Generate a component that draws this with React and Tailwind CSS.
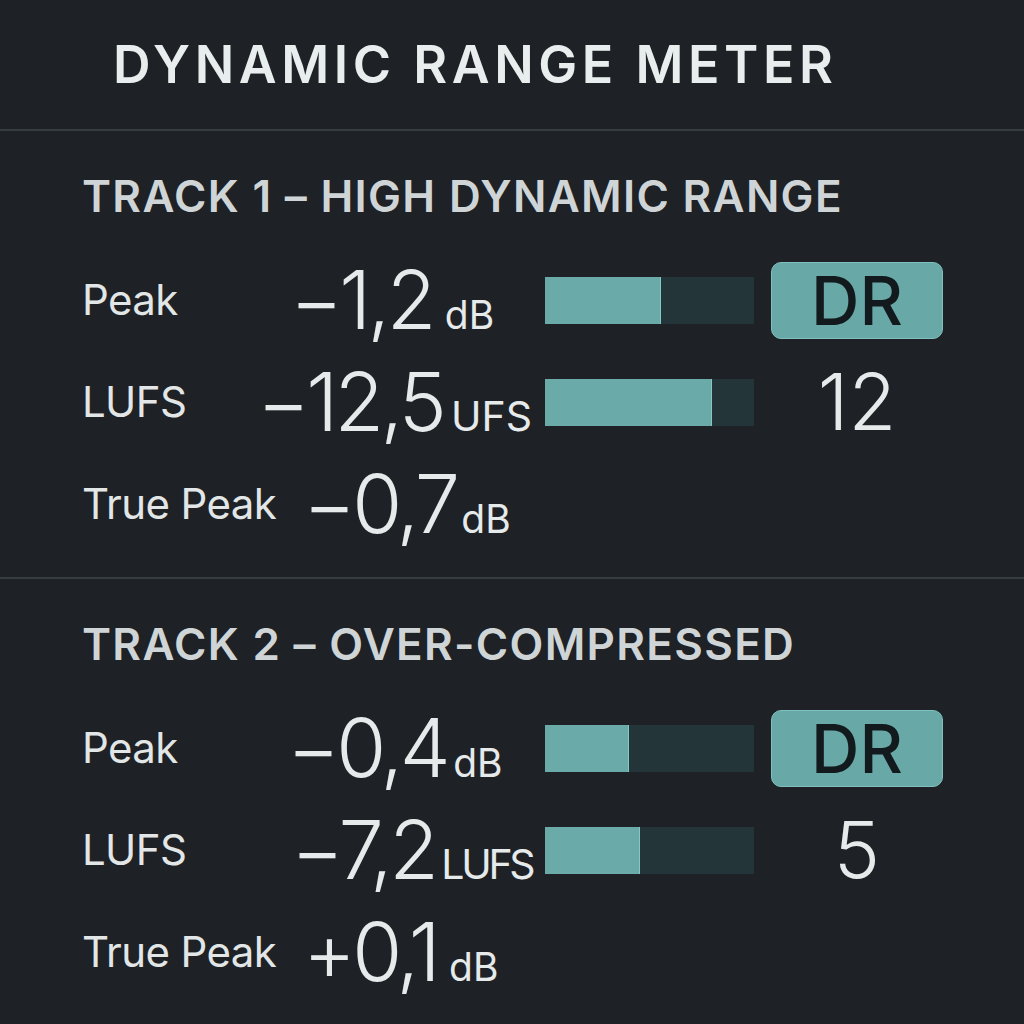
import React from "react";

const tracks = [
  {
    title: "TRACK 1 – HIGH DYNAMIC RANGE",
    dr: "12",
    rows: [
      { label: "Peak", value: "−1,2", unit: "dB", unitCls: "text-[39px] ml-[12px]", shift: "ml-[30px]", bar: 55.5 },
      { label: "LUFS", value: "−12,5", unit: "UFS", unitCls: "text-[41px] ml-[8px]", shift: "ml-[-3px]", bar: 80 },
      { label: "True Peak", value: "−0,7", unit: "dB", unitCls: "text-[39px] ml-[5px]", shift: "ml-[43px]", bar: null },
    ],
  },
  {
    title: "TRACK 2 – OVER-COMPRESSED",
    dr: "5",
    rows: [
      { label: "Peak", value: "−0,4", unit: "dB", unitCls: "text-[39px] ml-[6px]", shift: "ml-[27px]", bar: 40 },
      { label: "LUFS", value: "−7,2", unit: "LUFS", unitCls: "text-[41px] ml-[6px] tracking-[-0.08em]", shift: "ml-[31px]", bar: 45.5 },
      { label: "True Peak", value: "+0,1", unit: "dB", unitCls: "text-[39px] ml-[12px]", shift: "ml-[43px]", bar: null },
    ],
  },
];

function Bar({ pct }) {
  return (
    <div className="w-[209px] h-[47px] bg-[#24353a] flex">
      <div className="h-full bg-[#6aabaa] border-r border-[#86c6c3]" style={{ width: `${pct}%` }} />
    </div>
  );
}

function Row({ row, right }) {
  return (
    <div className="h-[102px] flex items-center">
      <div className="w-[178px] shrink-0 whitespace-nowrap text-[42px] leading-none text-[#e2e6e6] tracking-[-0.015em]">
        {row.label}
      </div>
      <div className="w-[285px] shrink-0 flex">
        <div className={`flex items-baseline leading-none text-[#e6eaea] whitespace-nowrap ${row.shift}`}>
          <span className="text-[81px] font-[350] tracking-[-0.045em]">{row.value}</span>
          <span className={row.unitCls}>{row.unit}</span>
        </div>
      </div>
      {row.bar !== null && <Bar pct={row.bar} />}
      {right && <div className="ml-[17px] w-[172px] flex justify-center">{right}</div>}
    </div>
  );
}

function Track({ track, last }) {
  return (
    <section className={`pl-[82px] pt-[43px] ${last ? "" : "pb-[22px] border-b-2 border-[#343d40]"}`}>
      <h2 className="text-[44px] leading-none font-semibold tracking-[0.03em] text-[#cfd5d6] whitespace-nowrap">
        {track.title}
      </h2>
      <div className="mt-[31px]">
        <Row
          row={track.rows[0]}
          right={
            <div className="w-[172px] h-[77px] rounded-[10px] bg-[#68a9a7] border border-[#7fc1be] flex items-center justify-center">
              <span className="text-[67px] leading-none font-medium text-[#131a1e]">DR</span>
            </div>
          }
        />
        <Row
          row={track.rows[1]}
          right={<span className="text-[78px] leading-none font-[350] text-[#e6eaea]">{track.dr}</span>}
        />
        <Row row={track.rows[2]} />
      </div>
    </section>
  );
}

export default function App() {
  return (
    <div
      className="w-[1024px] h-[1024px] bg-[#1e2125] overflow-hidden"
      style={{ fontFamily: "Inter, 'Noto Sans', sans-serif" }}
    >
      <header className="h-[131px] pl-[113px] flex items-center border-b-2 border-[#343d40]">
        <h1 className="text-[52px] leading-none font-semibold tracking-[0.088em] text-[#e8eded] whitespace-nowrap">
          DYNAMIC RANGE METER
        </h1>
      </header>
      {tracks.map((t, i) => (
        <Track key={i} track={t} last={i === tracks.length - 1} />
      ))}
    </div>
  );
}
